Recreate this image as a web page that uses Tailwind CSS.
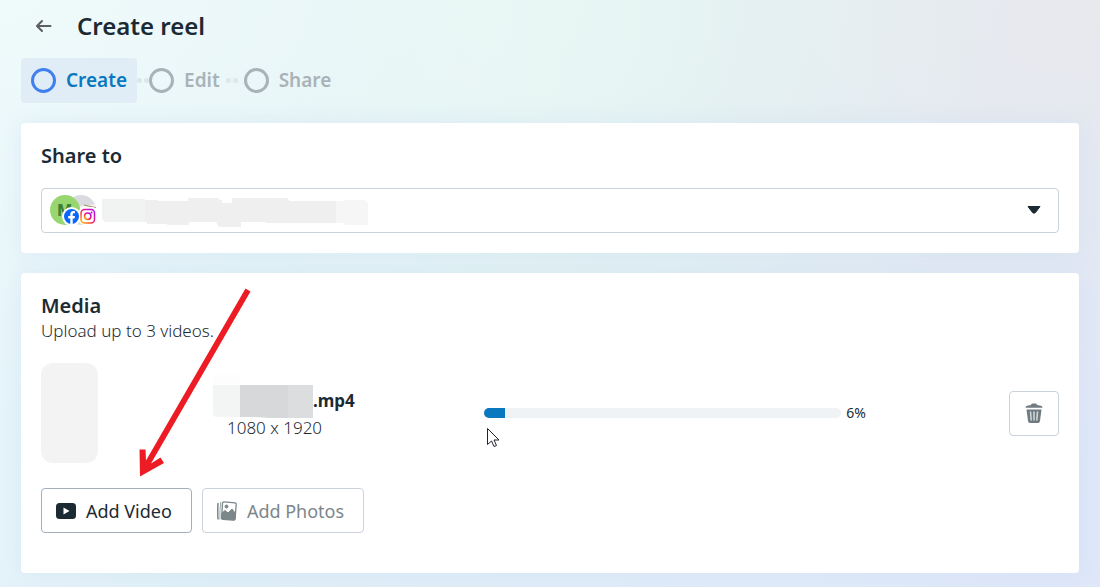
<!DOCTYPE html>
<html lang="en">

<head>
    <meta charset="UTF-8" />
    <meta name="viewport" content="width=device-width, initial-scale=1.0" />
    <title>Create reel</title>
    <script src="https://cdn.jsdelivr.net/npm/@tailwindcss/browser@4"></script>
</head>

<body
    class="min-h-screen overflow-x-hidden font-['Noto_Sans','Open_Sans',sans-serif] text-[#1c2b33] bg-[#e2ecf8] bg-[radial-gradient(ellipse_at_0%_0%,#effafa_0%,transparent_50%),radial-gradient(ellipse_at_50%_0%,#e5f6f1_0%,transparent_60%),radial-gradient(ellipse_at_100%_0%,#e8e9ed_0%,transparent_55%),linear-gradient(100deg,#e8f5fb_0%,#e0eff7_25%,#dfe7f9_100%)]">

    <div class="px-[21px] pt-2 pb-5">

        <header class="flex items-center h-9 pl-3 gap-6">
            <a href="#" aria-label="Back" class="block">
                <svg class="w-5 h-5 text-[#5b5f61]" fill="none" stroke="currentColor" stroke-width="2"
                    viewBox="0 0 20 20" stroke-linecap="round" stroke-linejoin="round">
                    <path d="M17.500 10H4.500M9 5L4 10L9 15" />
                </svg>
            </a>
            <h1 class="text-2xl font-semibold">Create reel</h1>
        </header>

        <!-- Steps -->
        <nav class="flex items-center mt-[14px] h-[45px] text-[19px] font-semibold text-[#a9b3b7]">
            <a href="#" aria-current="step"
                class="flex items-center gap-[10px] h-full px-[10px] rounded bg-[#e0edf7] text-[#0a78be]">
                <span class="w-[25px] h-[25px] rounded-full border-[3px] border-[#4080ee]"></span>
                Create
            </a>
            <span class="flex gap-[2px]">
                <i class="w-[5px] h-[5px] rounded-full bg-[#dbe7e9]"></i>
                <i class="w-[5px] h-[5px] rounded-full bg-[#dbe7e9]"></i>
            </span>
            <a href="#" class="flex items-center gap-[10px]">
                <span class="w-[25px] h-[25px] rounded-full border-[3px] border-[#a9b3b7]"></span>
                Edit
            </a>
            <span class="flex gap-[2px] mx-[6px]">
                <i class="w-[5px] h-[5px] rounded-full bg-[#dbe7e9]"></i>
                <i class="w-[5px] h-[5px] rounded-full bg-[#dbe7e9]"></i>
            </span>
            <a href="#" class="flex items-center gap-[10px]">
                <span class="w-[25px] h-[25px] rounded-full border-[3px] border-[#a9b3b7]"></span>
                Share
            </a>
        </nav>

        <main class="flex flex-col gap-5 mt-5">

            <section class="bg-white rounded p-5 shadow-[0_0_20px_rgba(190,215,240,0.35)]">
                <label for="account" class="block text-xl leading-[25px] font-semibold mb-5">Share to</label>
                <div class="relative">
                    <select id="account"
                        class="block w-full h-[45px] appearance-none rounded border border-[#cbd2d9] bg-white"></select>

                    <svg class="absolute left-2 top-0 w-[322px] h-[45px] pointer-events-none" viewBox="49 188 322 45">
                        <defs>
                            <linearGradient id="ig" x1="0" y1="1" x2="1" y2="0">
                                <stop offset="0" stop-color="#ffc800" />
                                <stop offset=".4" stop-color="#ff2a4e" />
                                <stop offset="1" stop-color="#a600ff" />
                            </linearGradient>
                            <clipPath id="photo">
                                <circle cx="81" cy="210" r="15" />
                            </clipPath>
                        </defs>
                        <g clip-path="url(#photo)">
                            <rect x="66" y="195" width="30" height="30" fill="#d9dbe0" />
                            <path d="M80 206L97 204V211L80 210Z" fill="#f3f1ee" />
                            <path d="M84 205L97 208" stroke="#a68a60" stroke-width="1" />
                        </g>
                        <circle cx="65" cy="210" r="15" fill="#98d66f" />
                        <text x="57" y="216" font-size="16" font-weight="800" fill="#3c7f35">M</text>
                        <circle cx="71.500" cy="216.500" r="9.500" fill="#fff" />
                        <circle cx="71.500" cy="216.500" r="7.500" fill="#0866ff" />
                        <path
                            d="M70.300 224V218.500H68.200V216H70.300V214.500C70.300 212 71.500 211 73.600 211C74.200 211 74.700 211.100 75 211.200V213.300H73.900C73 213.300 72.700 213.700 72.700 214.600V216H75L74.600 218.500H72.700V224Z"
                            fill="#fff" />
                        <rect x="79" y="207" width="18" height="18" rx="5" fill="#fff" />
                        <rect x="81" y="209.500" width="13.500" height="13.500" rx="3.500" fill="none" stroke="url(#ig)"
                            stroke-width="1.500" />
                        <circle cx="87.700" cy="216.300" r="3.200" fill="none" stroke="url(#ig)" stroke-width="1.500" />
                        <circle cx="91.600" cy="212.400" r="1" fill="#c716c9" />

                        <path d="M102 200Q102 199 103 199H145V222H105L102 219Z" fill="#f1f2f2" />
                        <path
                            d="M145 200H158V201H188V198H219V200H222V203H232V198H287L290 201H336V223H266V222H241V227H219L216 222H189V225H167V224H147V222H145Z"
                            fill="#efefef" />
                        <path d="M336 201H344L346 200H365L368 203V225H345V223H336Z" fill="#f6f6f6" />
                    </svg>

                    <svg class="absolute right-[17px] top-[17px] w-4 h-[10px] pointer-events-none" viewBox="0 0 16 10">
                        <path d="M2 1.500H14L9.500 7.500Q8 9 6.500 7.500Z" fill="#1c2b33" stroke="#1c2b33"
                            stroke-linejoin="round" />
                    </svg>
                </div>
            </section>

            <section class="relative bg-white rounded p-5 pb-10 shadow-[0_0_20px_rgba(190,215,240,0.35)]">
                <h2 class="text-xl leading-[25px] font-semibold">Media</h2>
                <p class="text-[17px] leading-[25px] font-light">Upload up to 3 videos.</p>

                <div class="grid grid-cols-[172px_271px_1fr_193px] items-center mt-5">
                    <div class="w-[57px] h-[100px] rounded-xl bg-[#f3f3f3]"></div>

                    <div class="pb-1">
                        <div class="flex items-center h-[33px]">
                            <svg class="w-[100px] h-[43px] -mt-[10px] shrink-0" viewBox="0 0 100 43">
                                <path d="M0 0H27V10H0Z" fill="#fdfdfd" />
                                <path d="M0 10H27V42H4Q0 42 0 38Z" fill="#f3f5f5" />
                                <path d="M27 10H75V43H57L42 42H27Z" fill="#d7d8da" />
                                <path d="M75 10H100V43H75Z" fill="#dcdddf" />
                            </svg>
                            <span class="text-[17px] font-bold">.mp4</span>
                        </div>
                        <p class="pl-[14px] text-[17px] leading-5 font-light">1080 x 1920</p>
                    </div>

                    <div class="flex items-center gap-[5px]">
                        <div role="progressbar" aria-label="Upload" aria-valuenow="6"
                            class="flex-1 h-[10px] rounded-full overflow-hidden bg-[#f0f3f6]">
                            <div class="h-full bg-[#0a78be]" style="width: 6%"></div>
                        </div>
                        <span class="text-sm">6%</span>
                    </div>

                    <button aria-label="Delete"
                        class="justify-self-end flex items-center justify-center w-[50px] h-[45px] rounded border border-[#cbd2d9] text-[#6f7b80]">
                        <svg class="w-5 h-5" viewBox="0 0 20 20" fill="none">
                            <path d="M7 2Q7 .5 8.500 .5H11.500Q13 .5 13 2L17 2.800Q18.500 3.200 18.500 4.800H1.500Q1.500 3.200 3 2.800Z"
                                fill="currentColor" />
                            <path d="M2.500 6.500H17.500L16 18Q15.700 20 14 20H6Q4.300 20 4 18Z" fill="currentColor" />
                            <path d="M6.500 8.500L7.200 17.500M10 8.500V17.500M13.500 8.500L12.800 17.500" stroke="#d5dadc"
                                stroke-width="1.500" />
                        </svg>
                    </button>
                </div>

                <div class="flex gap-[10px] mt-[25px]">
                    <button
                        class="flex items-center gap-[10px] h-[45px] pl-[14px] pr-[19px] rounded border border-[#a3b0bc] text-lg">
                        <svg class="w-5 h-5" viewBox="0 0 20 20">
                            <rect y="2" width="20" height="16" rx="3.500" fill="#1c2b33" />
                            <path d="M7.500 6.500V13.500L13.500 10Z" fill="#fff" />
                        </svg>
                        Add Video
                    </button>
                    <button disabled
                        class="flex items-center gap-[10px] h-[45px] pl-[14px] pr-[19px] rounded border border-[#cbd2d9] text-lg text-[#7b868b]">
                        <svg class="w-5 h-5" viewBox="0 0 20 20" fill="none" stroke="#7b868b">
                            <path d="M1 2.500Q.5 10 1 18" stroke-width="1.500" stroke-linecap="round" />
                            <path d="M3.800 .8Q2.500 9 3 18.500" stroke="#a3abaf" stroke-width="1" />
                            <path d="M7 .8L18 1.800Q19.300 2 19.200 3.300L18.100 17.500Q17.900 19.300 16.500 19.200L6 18.400Q4.500 18.200 4.600 16.700L5.500 2.100Q5.700 .7 7 .8Z"
                                stroke-width="1.300" />
                            <path d="M5 12L8 9.500L11 12L15 8L18.500 12.500L18 18.800L5 18Z" fill="#7b868b" />
                            <circle cx="9.500" cy="5.500" r="1.500" fill="#7b868b" />
                        </svg>
                        Add Photos
                    </button>
                </div>

                <!-- Pointer and red arrow drawn over the card -->
                <svg class="absolute left-[116px] top-[14px] w-[116px] h-[192px] pointer-events-none"
                    viewBox="137 287 116 192">
                    <path
                        d="M245.500 288.500L250.500 291.500L151 463.500L160.500 457.500L164 463L140 476.500L139.500 449.500H145.500L146 460.500Z"
                        fill="#ed1c24" />
                </svg>
                <svg class="absolute left-[465px] top-[154px] w-[14px] h-[21px] pointer-events-none"
                    viewBox="0 0 14 21">
                    <path d="M1.500 1.500V17.500L5.500 14L8 19.500L10.500 18.500L8 13H13Z" fill="#fff" stroke="#222232" />
                </svg>
            </section>

        </main>
    </div>

</body>

</html>
